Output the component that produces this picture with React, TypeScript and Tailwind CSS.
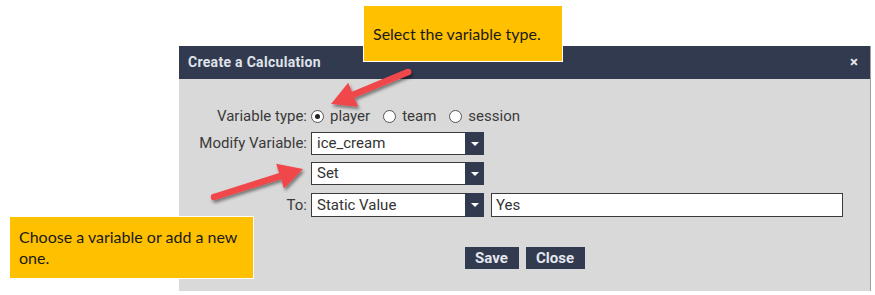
import { ReactNode } from "react";

type Pt = [number, number];

function arrowPoints(tail: Pt, tip: Pt, shaft = 6.5, headLen = 24, headW = 26) {
    const dx = tip[0] - tail[0];
    const dy = tip[1] - tail[1];
    const len = Math.hypot(dx, dy);
    const ux = dx / len, uy = dy / len;
    const nx = -uy, ny = ux;
    const bx = tip[0] - ux * headLen, by = tip[1] - uy * headLen;
    const s = shaft / 2, h = headW / 2;
    const pts: Pt[] = [
        [tail[0] + nx * s, tail[1] + ny * s],
        [bx + nx * s, by + ny * s],
        [bx + nx * h, by + ny * h],
        tip,
        [bx - nx * h, by - ny * h],
        [bx - nx * s, by - ny * s],
        [tail[0] - nx * s, tail[1] - ny * s],
    ];
    return pts.map(p => `${p[0].toFixed(1)},${p[1].toFixed(1)}`).join(" ");
}

function Arrows() {
    const arrows: [Pt, Pt][] = [
        [[408, 72], [331, 104]],
        [[214, 197], [303, 169]],
    ];
    return (
        <svg className="absolute inset-0 pointer-events-none" width="875" height="295">
            <defs>
                <filter id="sh" x="-20%" y="-20%" width="140%" height="160%">
                    <feDropShadow dx="1.5" dy="2.5" stdDeviation="1.6" floodColor="#000" floodOpacity="0.45" />
                </filter>
            </defs>
            {arrows.map(([a, b], i) => (
                <g key={i} filter="url(#sh)">
                    <polygon points={arrowPoints(a, b)} fill="#f0474c" strokeLinejoin="round" />
                    <circle cx={a[0]} cy={a[1]} r={3.25} fill="#f0474c" />
                </g>
            ))}
        </svg>
    );
}

function Select({ value, width = "w-[154px]" }: { value: string; width?: string }) {
    return (
        <div className="flex h-full">
            <div className={`${width} h-full bg-white border border-[#3b3b3b] border-r-0 flex items-center pl-[5px] text-[15px] text-[#333]`}>
                {value}
            </div>
            <div className="w-[19px] h-full bg-[#323a4f] flex items-center justify-center">
                <div className="w-0 h-0 border-l-[4px] border-r-[4px] border-t-[4px] border-l-transparent border-r-transparent border-t-white" />
            </div>
        </div>
    );
}

function Radio({ checked, label }: { checked?: boolean; label: string }) {
    return (
        <div className="flex items-center gap-[6px]">
            <div className="w-[13px] h-[13px] rounded-full border border-[#555] bg-white flex items-center justify-center">
                {checked && <div className="w-[5px] h-[5px] rounded-full bg-[#222]" />}
            </div>
            <span>{label}</span>
        </div>
    );
}

function Row({ label, children, className }: { label?: string; children: ReactNode; className: string }) {
    return (
        <div className={`flex items-center ${className}`}>
            <div className="w-[132px] text-right pr-[4px] whitespace-nowrap">{label}</div>
            {children}
        </div>
    );
}

export default function App() {
    return (
        <div className="relative w-[875px] h-[295px] bg-white overflow-hidden">
            <div className="ml-[179px] pt-[46px]">
                <div className="w-[692px] h-[245px] bg-[#d9d9d9] border-r border-[#a0a0a0] font-['Roboto',sans-serif] text-[15px] text-[#3a3a3a]">
                    <div className="h-[33px] bg-[#323a4f] flex items-center justify-between pl-[9px] pr-[12px]">
                        <span className="text-[14px] font-bold text-[#dfe3ea] tracking-[0.3px]">Create a Calculation</span>
                        <span className="text-[15px] font-bold text-[#e8e8e8] leading-none">×</span>
                    </div>
                    <Row label="Variable type:" className="mt-[27px] h-[20px]">
                        <div className="flex items-center gap-[13px]">
                            <Radio checked label="player" />
                            <Radio label="team" />
                            <Radio label="session" />
                        </div>
                    </Row>
                    <Row label="Modify Variable:" className="mt-[6px] h-[23px]">
                        <Select value="ice_cream" />
                    </Row>
                    <Row className="mt-[7px] h-[23px]">
                        <Select value="Set" />
                    </Row>
                    <Row label="To:" className="mt-[8px] h-[24px]">
                        <Select value="Static Value" />
                        <div className="ml-[7px] w-[352px] h-full bg-white border border-[#3b3b3b] flex items-center pl-[4px] text-[#333]">
                            Yes
                        </div>
                    </Row>
                    <div className="mt-[30px] flex justify-center gap-[7px]">
                        <button className="w-[54px] h-[22px] bg-[#323a4f] text-[#e4e7ee] text-[15px] font-bold">Save</button>
                        <button className="w-[59px] h-[22px] bg-[#323a4f] text-[#e4e7ee] text-[15px] font-bold">Close</button>
                    </div>
                </div>
            </div>

            <div className="absolute left-[363px] top-[5px] w-[200px] h-[57px] bg-[#ffc000] border border-white flex items-center pl-[9px] font-['Lato',sans-serif] text-[16px] text-[#1a1a1a]">
                Select the variable type.
            </div>
            <div className="absolute left-[9px] top-[216px] w-[245px] h-[63px] bg-[#ffc000] border border-white pl-[9px] pt-[9px] pr-[6px] font-['Lato',sans-serif] text-[16px] leading-[21px] text-[#1a1a1a]">
                Choose a variable or add a new one.
            </div>

            <Arrows />
        </div>
    );
}
